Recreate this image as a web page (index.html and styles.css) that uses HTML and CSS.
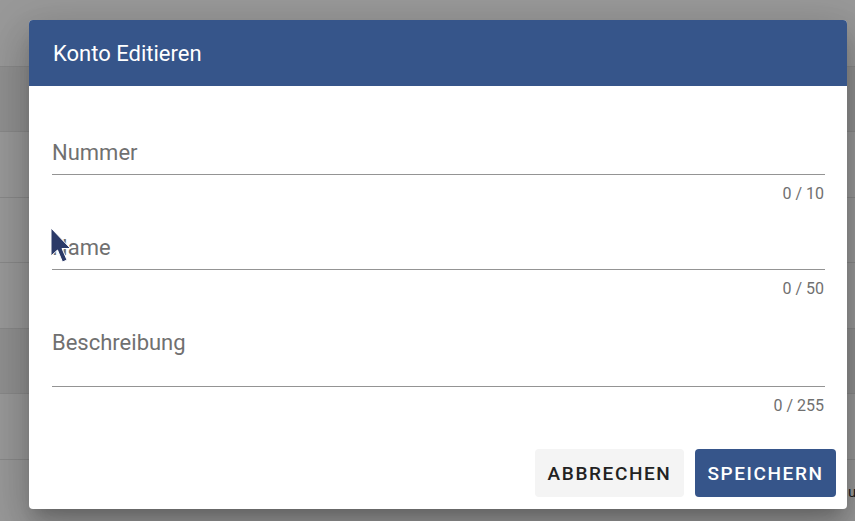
FILE: index.html
```html
<!DOCTYPE html>
<html lang="de">
<head>
<meta charset="utf-8">
<title>Konto Editieren</title>
<link rel="stylesheet" href="styles.css">
</head>
<body>
<div class="page">
  <div class="row head"></div>
  <div class="row shade"></div>
  <div class="row tall"></div>
  <div class="row"></div>
  <div class="row tall"></div>
  <div class="row shade"></div>
  <div class="row tall"></div>
  <div class="row last"><span class="cell-text">um</span></div>
</div>
<div class="overlay">
  <div class="dialog">
    <div class="dialog-header">Konto Editieren</div>
    <div class="dialog-body">
      <div class="field first">
        <div class="input">Nummer</div>
        <div class="counter">0 / 10</div>
      </div>
      <div class="field">
        <div class="input">Name</div>
        <div class="counter">0 / 50</div>
      </div>
      <div class="field">
        <div class="input textarea">Beschreibung</div>
        <div class="counter">0 / 255</div>
      </div>
    </div>
    <div class="dialog-actions">
      <button class="btn btn-cancel">ABBRECHEN</button>
      <button class="btn btn-save">SPEICHERN</button>
    </div>
  </div>
</div>
<svg class="cursor" width="22" height="38" viewBox="0 0 22 38">
  <path d="M1 1 L1 29 L7.5 23 L12.5 35 L17 33 L12 21.5 L20.5 21.5 Z" fill="#2b3a68" stroke="#ffffff" stroke-width="1"/>
</svg>
</body>
</html>
```
FILE: styles.css
```css
html, body {
  margin: 0;
  padding: 0;
}
body {
  width: 855px;
  height: 521px;
  overflow: hidden;
  background: #ffffff;
  font-family: Roboto, "Liberation Sans", sans-serif;
  position: relative;
}
.page {
  display: flex;
  flex-direction: column;
}
.row {
  height: 64px;
  border-bottom: 1px solid #e2e2e2;
  background: #ffffff;
  display: flex;
  align-items: center;
  white-space: nowrap;
  overflow: hidden;
  flex-shrink: 0;
}
.row.head { height: 66px; }
.row.tall { height: 65px; }
.row.shade { background: #eeeeee; }
.cell-text {
  padding-left: 848px;
  font-size: 15px;
  color: #212121;
}
.overlay {
  position: absolute;
  inset: 0;
  background: rgba(33, 33, 33, 0.46);
  display: flex;
  align-items: flex-start;
  padding: 20px 0 0 29px;
}
.dialog {
  width: 818px;
  background: #ffffff;
  border-radius: 4px;
  overflow: hidden;
  box-shadow: 0 11px 15px -7px rgba(0,0,0,.2), 0 24px 38px 3px rgba(0,0,0,.14), 0 9px 46px 8px rgba(0,0,0,.12);
}
.dialog-header {
  height: 66px;
  background: #36558a;
  color: #ffffff;
  font-size: 22px;
  display: flex;
  align-items: center;
  padding: 0 24px;
}
.dialog-body {
  padding: 0 22px 0 23px;
}
.field {
  padding-top: 30px;
}
.field.first {
  padding-top: 53px;
}
.input {
  font-size: 22px;
  line-height: 28px;
  color: #707070;
  padding-bottom: 7px;
  border-bottom: 1px solid #949494;
}
.input.textarea {
  padding-bottom: 29px;
}
.counter {
  margin-top: 9px;
  font-size: 16px;
  line-height: 20px;
  color: #707070;
  text-align: right;
  padding-right: 1px;
}
.dialog-actions {
  display: flex;
  justify-content: flex-end;
  gap: 11px;
  padding: 33px 11px 12px 0;
}
.btn {
  height: 48px;
  border: none;
  border-radius: 4px;
  font-family: Roboto, "Liberation Sans", sans-serif;
  font-size: 19px;
  font-weight: 500;
  letter-spacing: 1.6px;
  padding: 0;
  display: flex;
  align-items: center;
  justify-content: center;
}
.btn-cancel {
  width: 149px;
  background: #f4f4f4;
  color: #222222;
}
.btn-save {
  width: 141px;
  background: #36558a;
  color: #ffffff;
}
.cursor {
  position: absolute;
  left: 50px;
  top: 227px;
}
```
